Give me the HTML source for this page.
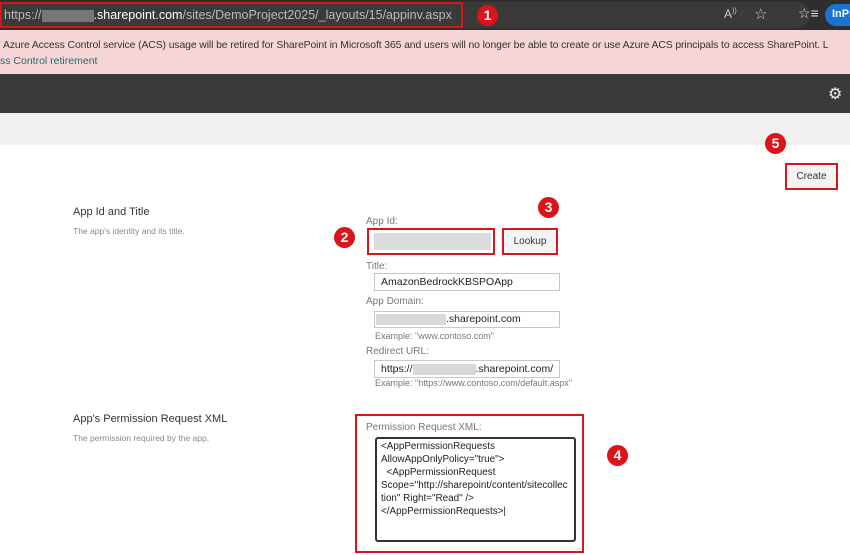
<!DOCTYPE html>
<html><head><style>
*{margin:0;padding:0;box-sizing:border-box}
body{width:850px;height:555px;position:relative;overflow:hidden;background:#fff;font-family:"Liberation Sans",sans-serif;color:#333}
.a{position:absolute;white-space:nowrap}
.badge{position:absolute;width:21px;height:21px;border-radius:50%;background:#d9141b;color:#fff;font-size:14px;font-weight:bold;text-align:center;line-height:21px}
.red{position:absolute;border:2px solid #d9141b}
.lbl{position:absolute;font-size:10px;color:#777;white-space:nowrap}
.inp{position:absolute;border:1px solid #c8c8c8;background:#fff;font-size:10.5px;color:#222;padding-left:6px;line-height:16px;white-space:nowrap;overflow:hidden}
.blur{display:inline-block;background:#d8d8d8;height:11px;vertical-align:middle}
</style></head><body>
<div class="a" style="left:0;top:0;width:850px;height:30px;background:#2e2e2e"></div>
<div class="a" style="left:0;top:2px;height:26px;background:#3a3a3a;border-radius:0 13px 13px 0;width:810px"></div>
<div class="red" style="left:0;top:2px;width:463px;height:26px"></div>
<div class="a" style="left:4px;top:8px;font-size:12.5px;color:#bbb">https://<span style="display:inline-block;width:52px;height:12px;background:#777;vertical-align:middle"></span><span style="color:#fff">.sharepoint.com</span>/sites/DemoProject2025/_layouts/15/appinv.aspx</div>
<div class="badge" style="left:477px;top:5px">1</div>
<div class="a" style="left:724px;top:7px;font-size:12px;color:#ccc">A<sup style="font-size:7px">))</sup></div>
<div class="a" style="left:754px;top:5px;font-size:15px;color:#ccc">☆</div>
<div class="a" style="left:798px;top:5px;font-size:14px;color:#ddd">☆≡</div>
<div class="a" style="left:825px;top:4px;width:40px;height:22px;border-radius:11px;background:#1a73d0;color:#fff;font-size:11px;font-weight:bold;padding:4px 0 0 7px">InPr</div>

<div class="a" style="left:0;top:30px;width:850px;height:44px;background:#f5d5d5"></div>
<div class="a" style="left:3px;top:40px;font-size:10.4px;letter-spacing:-0.1px;color:#333">Azure Access Control service (ACS) usage will be retired for SharePoint in Microsoft 365 and users will no longer be able to create or use Azure ACS principals to access SharePoint. L</div>
<div class="a" style="left:0;top:55px;font-size:10.5px;color:#1f6f6a">ss Control retirement</div>

<div class="a" style="left:0;top:74px;width:850px;height:39px;background:#3b3a38"></div>
<div class="a" style="left:828px;top:84px;font-size:16px;color:#eee">⚙</div>
<div class="a" style="left:0;top:113px;width:850px;height:32px;background:#f1f1f1"></div>

<div class="badge" style="left:765px;top:133px">5</div>
<div class="red" style="left:785px;top:163px;width:53px;height:27px"></div>
<div class="a" style="left:788px;top:166px;width:47px;height:21px;background:#f4f4f4;font-size:10px;color:#333;text-align:center;line-height:21px">Create</div>

<div class="a" style="left:73px;top:206px;font-size:11px;color:#333">App Id and Title</div>
<div class="a" style="left:73px;top:226px;font-size:8.5px;color:#888">The app's identity and its title.</div>

<div class="lbl" style="left:366px;top:216px">App Id:</div>
<div class="badge" style="left:334px;top:227px">2</div>
<div class="red" style="left:367px;top:228px;width:128px;height:27px"></div>
<div class="a" style="left:374px;top:233px;width:117px;height:17px;background:#dcdcdc"></div>
<div class="badge" style="left:538px;top:197px">3</div>
<div class="red" style="left:502px;top:228px;width:56px;height:27px"></div>
<div class="a" style="left:505px;top:231px;width:50px;height:21px;background:#f4f4f4;font-size:10px;text-align:center;line-height:21px">Lookup</div>

<div class="lbl" style="left:366px;top:261px">Title:</div>
<div class="inp" style="left:374px;top:273px;width:186px;height:18px">AmazonBedrockKBSPOApp</div>
<div class="lbl" style="left:366px;top:296px">App Domain:</div>
<div class="inp" style="left:374px;top:311px;width:186px;height:17px;padding-left:1px;line-height:15px"><span class="blur" style="width:70px"></span>.sharepoint.com</div>
<div class="lbl" style="left:375px;top:331px;font-size:9px">Example: "www.contoso.com"</div>
<div class="lbl" style="left:366px;top:346px">Redirect URL:</div>
<div class="inp" style="left:374px;top:360px;width:186px;height:18px">https://<span class="blur" style="width:63px"></span>.sharepoint.com/</div>
<div class="lbl" style="left:375px;top:378px;font-size:9px">Example: "https://www.contoso.com/default.aspx"</div>

<div class="a" style="left:73px;top:413px;font-size:11px;color:#333">App's Permission Request XML</div>
<div class="a" style="left:73px;top:433px;font-size:8.5px;color:#888">The permission required by the app.</div>

<div class="red" style="left:355px;top:414px;width:229px;height:139px"></div>
<div class="lbl" style="left:366px;top:422px">Permission Request XML:</div>
<div class="a" style="left:375px;top:437px;width:201px;height:105px;border:2px solid #333;border-radius:3px;font-size:9.9px;line-height:13px;color:#222;padding:1px 4px;overflow:hidden">&lt;AppPermissionRequests<br>AllowAppOnlyPolicy="true"&gt;<br>&nbsp;&nbsp;&lt;AppPermissionRequest<br>Scope="http://sharepoint/content/sitecollec<br>tion" Right="Read" /&gt;<br>&lt;/AppPermissionRequests&gt;|</div>
<div class="badge" style="left:607px;top:445px">4</div>
</body></html>
